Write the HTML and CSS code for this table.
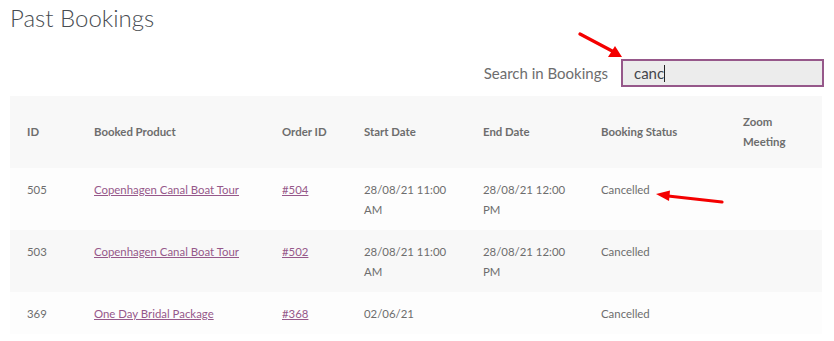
FILE: index.html
```html
<!DOCTYPE html>
<html lang="en">
<head>
<meta charset="utf-8">
<title>Past Bookings</title>
<link rel="stylesheet" href="styles.css">
</head>
<body>
<main class="page">
  <h2 class="title">Past Bookings</h2>
  <div class="search">
    <label class="search-label" for="booking-search">Search in Bookings</label>
    <div class="search-box">
      <input id="booking-search" class="search-input" type="text" value="canc">
      <span class="caret"></span>
    </div>
  </div>
  <table class="bookings">
    <colgroup>
      <col style="width:67px"><col style="width:188px"><col style="width:82px"><col style="width:119px"><col style="width:118px"><col style="width:142px"><col style="width:96px">
    </colgroup>
    <thead>
      <tr>
        <th>ID</th><th>Booked Product</th><th>Order ID</th><th>Start Date</th><th>End Date</th><th>Booking Status</th><th>Zoom Meeting</th>
      </tr>
    </thead>
    <tbody>
      <tr>
        <td>505</td>
        <td><a href="#">Copenhagen Canal Boat Tour</a></td>
        <td><a href="#">#504</a></td>
        <td>28/08/21 11:00 AM</td>
        <td>28/08/21 12:00 PM</td>
        <td>Cancelled</td>
        <td></td>
      </tr>
      <tr>
        <td>503</td>
        <td><a href="#">Copenhagen Canal Boat Tour</a></td>
        <td><a href="#">#502</a></td>
        <td>28/08/21 11:00 AM</td>
        <td>28/08/21 12:00 PM</td>
        <td>Cancelled</td>
        <td></td>
      </tr>
      <tr>
        <td>369</td>
        <td><a href="#">One Day Bridal Package</a></td>
        <td><a href="#">#368</a></td>
        <td>02/06/21</td>
        <td></td>
        <td>Cancelled</td>
        <td></td>
      </tr>
    </tbody>
  </table>

  <!-- callout arrows -->
  <svg class="arrow arrow-search" width="50" height="30" viewBox="0 0 50 30">
    <path d="M2 3 L36 21" stroke="#f40000" stroke-width="3.2" stroke-linecap="round" fill="none"/>
    <path d="M44 26 L30 26 L37 15 Z" fill="#f40000"/>
  </svg>
  <svg class="arrow arrow-status" width="72" height="16" viewBox="0 0 72 16">
    <path d="M68 12 L14 6" stroke="#f40000" stroke-width="3.2" stroke-linecap="round" fill="none"/>
    <path d="M2 4 L16 0.5 L15 11 Z" fill="#f40000"/>
  </svg>
</main>
</body>
</html>
```

FILE: styles.css
```css
* { box-sizing: border-box; }

html, body {
  margin: 0;
  background: #ffffff;
}

.page {
  position: relative;
  padding: 0 12px 0 10px;
  font-family: Lato, "Open Sans", sans-serif;
  color: #6d6d6d;
}

.title {
  margin: 0;
  padding-top: 4px;
  font-size: 24px;
  line-height: 28px;
  font-weight: 300;
  color: #484c51;
}

.search {
  display: flex;
  justify-content: flex-end;
  align-items: center;
  gap: 13px;
  margin-top: 27px;
  margin-right: -2px;
}

.search-label {
  font-size: 15px;
  color: #6d6d6d;
}

.search-box {
  position: relative;
  width: 203px;
  height: 28px;
}

.search-input {
  width: 100%;
  height: 100%;
  border: 2px solid #96588a;
  background: #ececec;
  padding: 0 0 0 11px;
  font-family: inherit;
  font-size: 15px;
  color: #43454b;
  outline: none;
}

.caret {
  position: absolute;
  left: 43px;
  top: 6px;
  width: 1px;
  height: 17px;
  background: #222;
}

.bookings {
  margin-top: 9px;
  width: 812px;
  border-collapse: collapse;
  table-layout: fixed;
  font-size: 11.4px;
  line-height: 20px;
}

.bookings th {
  text-align: left;
  font-weight: 700;
  color: #6d6d6d;
  background: #f8f8f8;
  padding: 16px 17px;
  vertical-align: middle;
}

.bookings td {
  text-align: left;
  vertical-align: top;
  padding: 12px 17px 10px;
  background: #fdfdfd;
}

.bookings tbody tr:nth-child(even) td {
  background: #f8f8f8;
}

.bookings a {
  color: #96588a;
  text-decoration: underline;
}

.arrow {
  position: absolute;
}

.arrow-search {
  left: 578px;
  top: 31px;
}

.arrow-status {
  left: 654px;
  top: 190px;
}
```
